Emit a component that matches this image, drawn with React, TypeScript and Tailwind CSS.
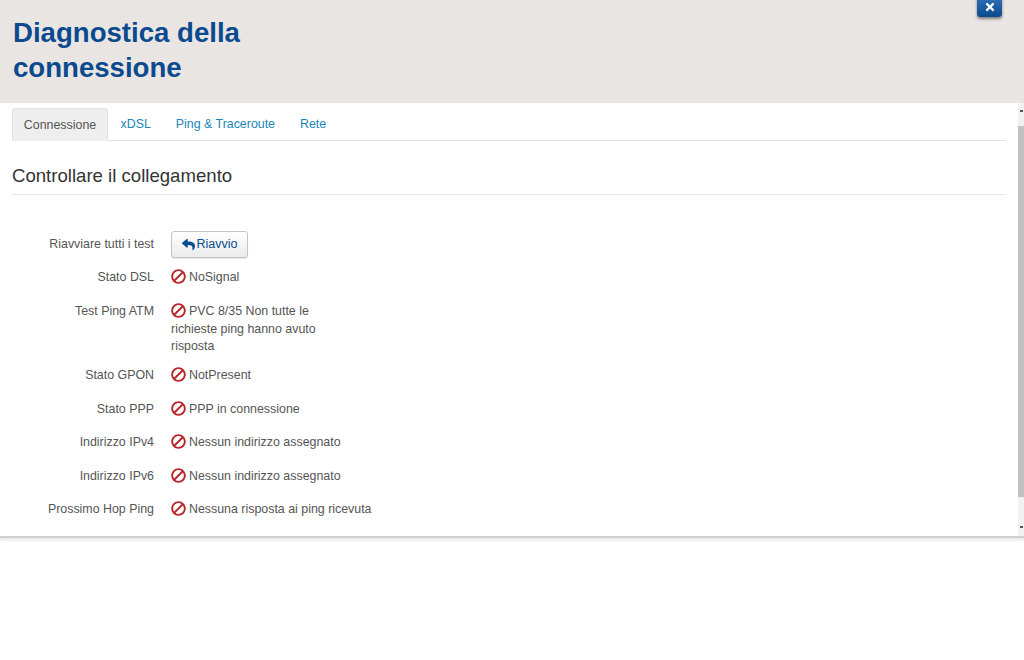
import { FaBan, FaReply, FaTimes } from 'react-icons/fa'

const rows = [
  { label: 'Stato DSL', value: 'NoSignal', cls: 'h-[34px]' },
  { label: 'Test Ping ATM', value: 'PVC 8/35 Non tutte le richieste ping hanno avuto risposta', cls: 'h-[64px]' },
  { label: 'Stato GPON', value: 'NotPresent', cls: 'h-[34px]' },
  { label: 'Stato PPP', value: 'PPP in connessione', cls: 'h-[33px]' },
  { label: 'Indirizzo IPv4', value: 'Nessun indirizzo assegnato', cls: 'h-[34px]' },
  { label: 'Indirizzo IPv6', value: 'Nessun indirizzo assegnato', cls: 'h-[33px]' },
  { label: 'Prossimo Hop Ping', value: 'Nessuna risposta ai ping ricevuta', cls: 'h-[28px]', nowrap: true },
]

const tabs = ['xDSL', 'Ping & Traceroute', 'Rete']

export default function App() {
  return (
    <div className="relative flex h-[660px] w-[1024px] flex-col overflow-hidden bg-white font-['Liberation_Sans',Arial,sans-serif] text-[12.4px] text-[#555]">
      {/* Header */}
      <header className="h-[103px] shrink-0 bg-[#e9e5e2] pl-[13px] pt-[15px]">
        <h1 className="w-[280px] text-[27.6px] leading-[35px] font-bold text-[#0b4a8f]">Diagnostica della connessione</h1>
      </header>

      {/* Close button */}
      <button className="absolute top-[-8px] right-[22px] flex h-[25px] w-[25px] items-center justify-center rounded-[3px] bg-gradient-to-b from-[#3a7cc0] to-[#0b4a8f] shadow-[0_2px_3px_rgba(0,0,0,0.45)]">
        <FaTimes size={12} className="mt-[5px] text-white" />
      </button>

      {/* Scrolling panel */}
      <div className="flex h-[435px] shrink-0 border-b-2 border-[#cfcfcf] shadow-[0_3px_2px_rgba(0,0,0,0.08)]">
        <main className="min-w-0 flex-1 pl-3 pr-3 pt-[5px]">
          <nav className="flex h-[33px] border-b border-[#e2e2e2]">
            <span className="flex h-[33px] w-[96px] items-center justify-center rounded-t-[3px] border border-b-0 border-[#e2e2e2] bg-[#eeeeee] text-[#555]">Connessione</span>
            {tabs.map((tab) => (
              <span key={tab} className="flex items-center px-[12.5px] text-[#1a87b8]">{tab}</span>
            ))}
          </nav>

          <h2 className="mt-[23px] border-b border-[#e6e6e6] pb-[6px] text-[18.6px] leading-[24px] text-[#333]">Controllare il collegamento</h2>

          <div className="mt-[35px] grid grid-cols-[142px_1fr] items-center gap-x-[17px]">
            <span className="text-right">Riavviare tutti i test</span>
            <div className="h-[28px] pt-[1px]">
              <button className="flex h-[27px] w-[77px] items-center justify-center gap-[2px] rounded-[3px] border border-[#c4c4c4] bg-gradient-to-b from-white to-[#ebebeb] text-[12.5px] text-[#0b4a8f] shadow-[0_1px_1px_rgba(0,0,0,0.1)]">
                <FaReply size={13} />
                Riavvio
              </button>
            </div>
          </div>

          <div className="mt-[2px]">
            {rows.map((row) => (
              <div key={row.label} className={`grid grid-cols-[142px_1fr] gap-x-[17px] pt-[9px] leading-[17.5px] ${row.cls}`}>
                <span className="text-right">{row.label}</span>
                <p className={row.nowrap ? 'whitespace-nowrap' : 'w-[180px]'}>
                  <FaBan size={15} className="mr-[3px] inline-block -scale-x-100 align-[-3px] text-[#b8262b]" />
                  {row.value}
                </p>
              </div>
            ))}
          </div>
        </main>

        {/* Scrollbar */}
        <div className="flex w-[6px] shrink-0 flex-col bg-[#f1f1f1]">
          <div className="flex h-[23px] items-start justify-end pt-[7px] pr-[1px]">
            <div className="h-[2px] w-[3px] bg-[#555]" />
          </div>
          <div className="h-[371px] bg-[#c1c1c1]" />
          <div className="flex flex-1 items-end justify-end pb-[8px] pr-[1px]">
            <div className="h-[2px] w-[3px] bg-[#555]" />
          </div>
        </div>
      </div>
    </div>
  )
}
